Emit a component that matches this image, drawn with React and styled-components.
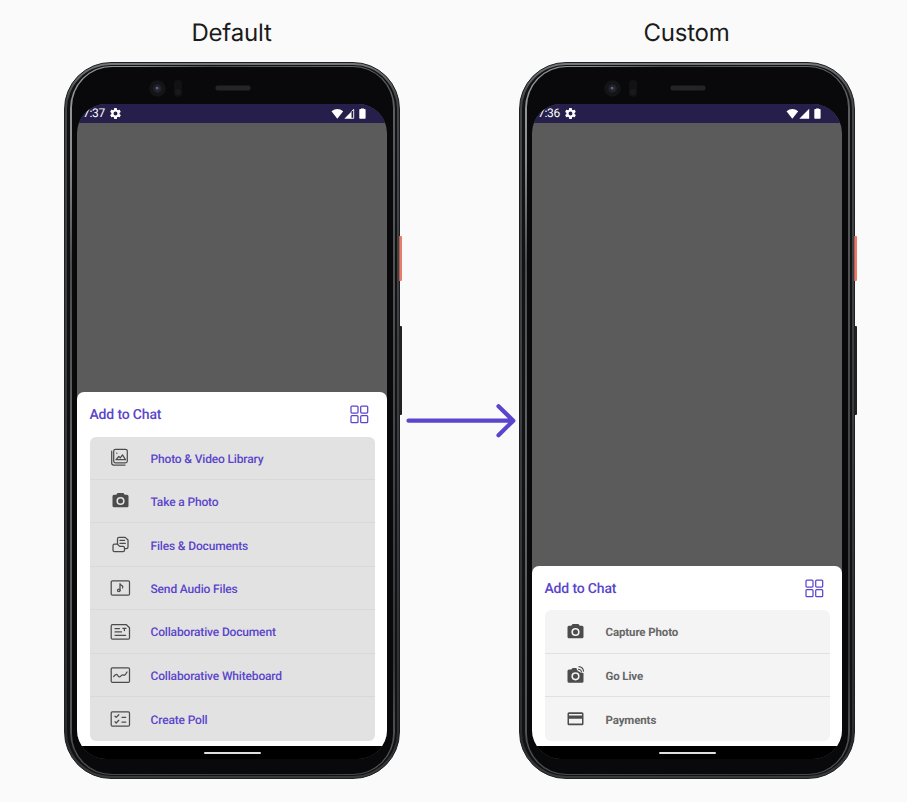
import React from "react";
import styled, { createGlobalStyle, css } from "styled-components";

const Global = createGlobalStyle`
  * { box-sizing: border-box; }
  body { margin: 0; background: #fafafa; font-family: Roboto, "Liberation Sans", sans-serif; text-rendering: geometricPrecision; }
`;

const Page = styled.main`
  width: 907px;
  height: 802px;
  padding: 14px 0 0 64px;
  display: flex;
  background: #fafafa;
  overflow: hidden;
`;

const Column = styled.section`
  width: 336px;
  flex: none;
  display: flex;
  flex-direction: column;
`;

const Caption = styled.h2`
  margin: 0;
  height: 48px;
  padding-right: 1px;
  text-align: center;
  font: 400 24px/37px Inter, sans-serif;
  font-optical-sizing: none;
  letter-spacing: -0.2px;
  color: #1b1b1b;
`;

const Device = styled.div`
  position: relative;
  width: 336px;
  height: 717px;
`;

const SideButton = styled.span`
  position: absolute;
  z-index: 1;
  left: 335px;
  top: ${(p) => p.$top}px;
  width: 3px;
  height: ${(p) => p.$height}px;
  border-radius: 0 1px 1px 0;
  background: ${(p) => p.$color};
`;

const Shell = styled.div`
  position: relative;
  height: 100%;
  width: 335.5px;
  padding: 2px;
  border-radius: 47px;
  border: 1px solid #1d1f21;
  background: linear-gradient(#74787c, #44474a 5%, #3a3d40 50%, #2a2d2e 95%, #3a3c3c);
`;

const Rim = styled.div`
  height: 100%;
  border-radius: 44px;
  border: solid #111214;
  border-width: 1px 2px 1px 3px;
  background: linear-gradient(125deg, #97999b 0, #8b8d8e 8%, #4a4c4e 17%, #626365 35%, #444647 70%, #343637 90%, #5c5e5e 100%);
  padding: 1px 2px 1.5px 2px;
`;

const Bezel = styled.div`
  height: 100%;
  padding: 0 0 0 5px;
  border-radius: 40px;
  background: #09090c;
  display: flex;
  flex-direction: column;
`;

const Sensors = styled.div`
  height: 37px;
  flex: none;
  padding: 12px 0 0 65.5px;
`;

const Screen = styled.div`
  width: 310.4px;
  height: 655.4px;
  flex: none;
  border-radius: 29px;
  overflow: hidden;
  background: #5b5b5b;
  display: flex;
  flex-direction: column;
`;

const StatusBar = styled.header`
  height: 19px;
  flex: none;
  background: #261f4b;
  color: #fff;
  display: flex;
  align-items: center;
  justify-content: space-between;
  padding: 0 19.4px 0 6px;
`;

const StatusGroup = styled.div`
  display: flex;
  align-items: center;
  gap: 4px;
`;

const Clock = styled.span`
  font-size: 12px;
  line-height: 19px;
  letter-spacing: -0.3px;
`;

const Backdrop = styled.div`
  flex: 1;
`;

const Sheet = styled.div`
  flex: none;
  margin-top: auto;
  padding: 0 12.5px 5.8px;
  background: #fff;
  border-radius: 7px 7px 0 0;
`;

const SheetHeader = styled.div`
  height: 44.2px;
  display: flex;
  align-items: center;
  justify-content: space-between;
  padding: 0.4px 6px 0 0;
  color: #5a45cc;
`;

const SheetTitle = styled.h3`
  margin: 0;
  padding-top: 1.4px;
  font-weight: 500;
  font-size: 14px;
  line-height: 20px;
  letter-spacing: -0.16px;
`;

const List = styled.ul`
  list-style: none;
  margin: 0;
  padding: 0;
  border-radius: 6px;
  overflow: hidden;
  background: ${(p) => (p.$custom ? "#f4f4f4" : "#e2e2e2")};
`;

const Item = styled.li`
  height: 43.43px;
  display: flex;
  align-items: center;
  padding-left: 20px;
  gap: 20px;
  color: #4c4c4c;
  &:not(:last-child) { border-bottom: 1px solid ${(p) => (p.$custom ? "#e1e1e1" : "#d9d9d9")}; }
`;

const ItemLabel = styled.span`
  padding-top: 1.8px;
  font-size: 12px;
  line-height: 16px;
  ${(p) =>
    p.$custom
      ? css`font-weight: 700; font-size: 11.5px; letter-spacing: -0.12px; color: #676767;`
      : css`font-weight: 500; letter-spacing: -0.16px; color: #5a45cc;`}
`;

const NavBar = styled.div`
  height: 13px;
  flex: none;
  background: #000;
  display: flex;
  justify-content: center;
  padding-top: 6px;
`;

const NavHandle = styled.span`
  width: 57px;
  height: 2px;
  border-radius: 1px;
  background: #dfdfdf;
`;

const ArrowWrap = styled.div`
  width: 119px;
  flex: none;
  padding: 387px 0 0 5px;
`;

const Line = styled.svg`
  display: block;
  flex: none;
  fill: none;
  stroke: currentColor;
  stroke-width: 1.25;
  stroke-linecap: round;
  stroke-linejoin: round;
`;

const Solid = styled.svg`
  display: block;
  flex: none;
  fill: currentColor;
`;

const Front = () => (
  <svg width="140" height="22" viewBox="0 0 140 22">
    <circle cx="14.5" cy="9.5" r="8.3" fill="#141416" />
    <circle cx="14.5" cy="9.5" r="4.3" fill="#202129" />
    <circle cx="14.5" cy="9.5" r="2.1" fill="#2f3448" />
    <circle cx="14" cy="9" r="1" fill="#727887" />
    <rect x="31" y="1" width="8" height="17" rx="4" fill="#121214" />
    <circle cx="35" cy="13" r="3" fill="#19191b" />
    <rect x="72.5" y="6.5" width="35" height="5" rx="2" fill="#252526" />
  </svg>
);

const Gear = () => (
  <Solid width="13" height="13" viewBox="0 0 24 24">
    <path d="M19.4 13a7.5 7.5 0 0 0 0-2l2.1-1.6a.5.5 0 0 0 .1-.7l-2-3.4a.5.5 0 0 0-.6-.2l-2.5 1a7.3 7.3 0 0 0-1.7-1L14.4 2.4a.5.5 0 0 0-.5-.4h-4a.5.5 0 0 0-.5.4L9.1 5.1a7.3 7.3 0 0 0-1.7 1l-2.5-1a.5.5 0 0 0-.6.2l-2 3.4a.5.5 0 0 0 .1.7L4.5 11a7.5 7.5 0 0 0 0 2l-2.1 1.6a.5.5 0 0 0-.1.7l2 3.4a.5.5 0 0 0 .6.2l2.5-1a7.3 7.3 0 0 0 1.7 1l.4 2.7a.5.5 0 0 0 .5.4h4a.5.5 0 0 0 .5-.4l.4-2.7a7.3 7.3 0 0 0 1.7-1l2.5 1a.5.5 0 0 0 .6-.2l2-3.4a.5.5 0 0 0-.1-.7ZM12 15.6a3.6 3.6 0 1 1 0-7.2 3.6 3.6 0 0 1 0 7.2Z" />
  </Solid>
);

const Signals = ({ partial }) => (
  <Solid width="37" height="12" viewBox="0 0 37 12">
    <path d="M0.5 3.2Q6.3-1.2 12.2 3.2L6.3 10.7Z" />
    {partial ? (
      <>
        <path d="M13.3 10.7 20.5 3.5V10.7Z" />
        <path d="M20.5 3.5 22.7 1.3V10.3H20" fill="none" stroke="currentColor" strokeWidth=".9" />
      </>
    ) : (
      <path d="M13.3 10.7 23.2.8V10.7Z" />
    )}
    <path d="M30 1V.4h3V1h.8q.8 0 .8.8V9.9q0 .8-.8.8h-4.7q-.8 0-.8-.8V1.8q0-.8.8-.8Z" />
  </Solid>
);

const Grid = () => (
  <Line width="19" height="19" viewBox="0 0 19 19">
    <rect x="1" y="1" width="7" height="7" rx="1" />
    <rect x="10.7" y="1" width="7" height="7" rx="1" />
    <rect x="1" y="10.7" width="7" height="7" rx="1" />
    <rect x="10.7" y="10.7" width="7" height="7" rx="1" />
  </Line>
);

const Frame = ({ children }) => (
  <Line width="21" height="20" viewBox="0 0 21 20">{children}</Line>
);

const Camera = ({ live }) => (
  <Solid width="21" height="20" viewBox="0 0 21 20">
    <path
      fillRule="evenodd"
      d={
        live
          ? "M4 4.5H6.2L7.6 3H11.4Q12 7.2 18.5 8V16.2Q18.5 17.7 17 17.7H4Q2.5 17.7 2.5 16.2V6Q2.5 4.5 4 4.5ZM10.5 7.2A4.1 4.1 0 1 0 10.5 15.4 4.1 4.1 0 1 0 10.5 7.2Z"
          : "M4 3.7H6.2L7.6 2.1H13.4L14.8 3.7H17Q18.5 3.7 18.5 5.2V14.8Q18.5 16.3 17 16.3H4Q2.5 16.3 2.5 14.8V5.2Q2.5 3.7 4 3.7ZM10.5 5.9A4.1 4.1 0 1 0 10.5 14.1 4.1 4.1 0 1 0 10.5 5.9Z"
      }
    />
    <circle cx="10.5" cy={live ? 11.3 : 10} r="2.5" />
    {live && (
      <path
        d="M13 4.2Q16.3 4.2 16.5 7.2M13.5 1.6Q18.3 1.8 18.6 6.6"
        fill="none"
        stroke="currentColor"
        strokeWidth="1.1"
      />
    )}
  </Solid>
);

const icons = {
  library: (
    <Frame>
      <rect x="3.7" y="1.3" width="13.6" height="13.6" rx="1.8" />
      <path d="M1.7 3.2V15Q1.7 17.1 3.8 17.1H15" />
      <path d="M6 11.7H15.500L12.500 6.900 10.300 9.900 8.800 8.500 6 11.700ZM6.700 5.200h.2" />
    </Frame>
  ),
  camera: <Camera />,
  live: <Camera live />,
  files: (
    <Frame>
      <path d="M7.5 9V4Q7.5 2.4 9.1 2.4H15.2L18 5V12Q18 13.7 16.3 13.7H14.5" />
      <path d="M7.5 9.2H4.5Q3 9.2 3 10.7V15.3Q3 16.7 4.5 16.7H13Q14.5 16.7 14.5 15.3V13Q14.5 11.4 13 11.4H9.7L7.5 9.2ZM10 5.4H14.6M10 8.4H15.3" />
    </Frame>
  ),
  audio: (
    <Frame>
      <rect x="1.2" y="2.8" width="18.3" height="14.3" rx="1.2" />
      <path d="M10 12.5V5.6Q10.5 7 12 7.6 13.2 8.4 12.6 9.9" />
      <ellipse cx="8.8" cy="12.4" rx="1.3" ry="1.2" />
    </Frame>
  ),
  document: (
    <Frame>
      <path d="M2.4 2.7H16.4L19.5 5.7V15.9Q19.5 17.1 18.3 17.1H2.4Q1.2 17.1 1.2 15.9V3.9Q1.2 2.7 2.4 2.7ZM5 6.5H9.5M5 9.9H11.5M5 13.3H15.7M12.8 6.3H16M14.4 6.3V8.6" />
    </Frame>
  ),
  whiteboard: (
    <Frame>
      <rect x="1.2" y="2.8" width="18.3" height="14.6" rx="1.2" />
      <path d="M3.7 11.7Q6 8 7.8 10.5 9 13 11 10.8 12.7 9 14 10.3 15.7 10 17 7" />
    </Frame>
  ),
  poll: (
    <Frame>
      <rect x="1.2" y="2.8" width="18.3" height="14.3" rx="1.2" />
      <path d="M5 7.2 6.2 8.4 8.8 5.7M5 12.8 6.2 14 8.8 11.3M12 8.3H15.7M12 13.2H15.7" />
    </Frame>
  ),
  card: (
    <Solid width="21" height="20" viewBox="0 0 21 20">
      <path
        fillRule="evenodd"
        d="M4 3.3H17Q18.5 3.3 18.5 4.8V14.7Q18.5 16.2 17 16.2H4Q2.5 16.2 2.5 14.7V4.8Q2.5 3.3 4 3.3ZM4 5V6.5H17V5ZM4 9.7V14.6H17V9.7Z"
      />
    </Solid>
  ),
};

function Phone({ time, items, custom }) {
  return (
    <Device>
      <SideButton $top={174} $height={45} $color="linear-gradient(90deg, #b75d4f 0 1px, #e87c6c 1px)" />
      <SideButton $top={264} $height={89} $color="#202222" />
      <Shell>
        <Rim>
          <Bezel>
            <Sensors><Front /></Sensors>
            <Screen>
              <StatusBar>
                <StatusGroup>
                  <Clock>{time}</Clock>
                  <Gear />
                </StatusGroup>
                <Signals partial={!custom} />
              </StatusBar>
              <Backdrop />
              <Sheet>
                <SheetHeader>
                  <SheetTitle>Add to Chat</SheetTitle>
                  <Grid />
                </SheetHeader>
                <List $custom={custom}>
                  {items.map(([icon, label]) => (
                    <Item key={label} $custom={custom}>
                      {icons[icon]}
                      <ItemLabel $custom={custom}>{label}</ItemLabel>
                    </Item>
                  ))}
                </List>
              </Sheet>
              <NavBar><NavHandle /></NavBar>
            </Screen>
          </Bezel>
        </Rim>
      </Shell>
    </Device>
  );
}

const defaultItems = [
  ["library", "Photo & Video Library"],
  ["camera", "Take a Photo"],
  ["files", "Files & Documents"],
  ["audio", "Send Audio Files"],
  ["document", "Collaborative Document"],
  ["whiteboard", "Collaborative Whiteboard"],
  ["poll", "Create Poll"],
];

const customItems = [
  ["camera", "Capture Photo"],
  ["live", "Go Live"],
  ["card", "Payments"],
];

export default function App() {
  return (
    <>
      <Global />
      <Page>
        <Column>
          <Caption>Default</Caption>
          <Phone time="7:37" items={defaultItems} />
        </Column>
        <ArrowWrap>
          <svg width="114" height="40" viewBox="0 0 114 40" fill="none" stroke="#5a45cc" strokeWidth="4.2" strokeLinecap="round" strokeLinejoin="round">
            <path d="M3.5 19.7H108M93.5 5.3 108.3 19.7 93.5 34.2" />
          </svg>
        </ArrowWrap>
        <Column>
          <Caption>Custom</Caption>
          <Phone time="7:36" items={customItems} custom />
        </Column>
      </Page>
    </>
  );
}
